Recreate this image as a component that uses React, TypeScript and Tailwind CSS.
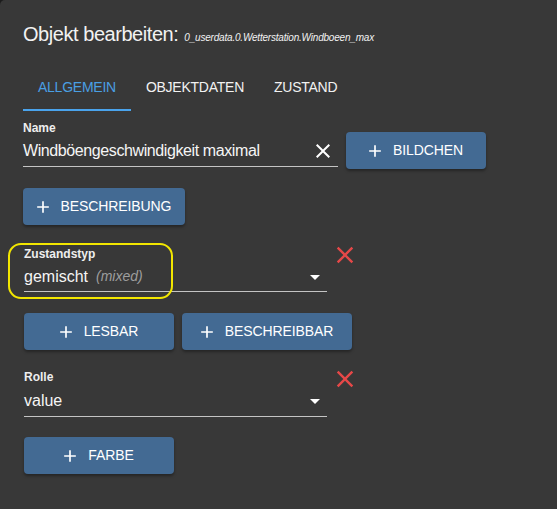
import { useState } from "react"

const font = { fontFamily: '"Liberation Sans", Arial, sans-serif' }

function PlusIcon() {
  return (
    <svg viewBox="0 0 24 24" className="w-[20px] h-[20px] -ml-[4px] mr-[8px] fill-current">
      <path d="M19 13h-6v6h-2v-6H5v-2h6V5h2v6h6v2z" />
    </svg>
  )
}

function CloseIcon({ className }: { className: string }) {
  return (
    <svg viewBox="0 0 24 24" className={className}>
      <path d="M19 6.41 17.59 5 12 10.59 6.41 5 5 6.41 10.59 12 5 17.59 6.41 19 12 13.41 17.59 19 19 17.59 13.41 12z" />
    </svg>
  )
}

function AddButton({ label, width }: { label: string; width: string }) {
  return (
    <button
      className={`${width} h-[37px] flex items-center justify-center rounded-[4px] bg-[#436a93] text-white text-[14px] tracking-[-0.1px] uppercase shadow-[0_2px_3px_rgba(0,0,0,0.35)]`}
    >
      <PlusIcon />
      {label}
    </button>
  )
}

function Arrow() {
  return (
    <svg viewBox="0 0 24 24" className="w-[24px] h-[24px] fill-white">
      <path d="M7 10l5 5 5-5z" />
    </svg>
  )
}

export default function App() {
  const [tab, setTab] = useState(0)
  const tabs = ["Allgemein", "Objektdaten", "Zustand"]

  return (
    <div className="w-[557px] h-[509px] bg-[#1c1c1c] overflow-hidden" style={font}>
      <div className="h-full bg-[#383838] rounded-tl-[5px] pl-[23px] text-white">
        {/* Title */}
        <div className="h-[63px] pt-[18px] flex items-baseline">
          <span className="text-[20px] leading-[32px] tracking-[-0.45px] text-[#f2f2f2]">Objekt bearbeiten:</span>
          <span className="ml-[6px] text-[10px] italic tracking-[-0.2px] text-[#f2f2f2]">0_userdata.0.Wetterstation.Windboeen_max</span>
        </div>

        {/* Tabs */}
        <div className="flex h-[48px]">
          {tabs.map((t, i) => (
            <button
              key={t}
              onClick={() => setTab(i)}
              className={`relative h-[48px] px-[15px] text-[14px] tracking-[-0.25px] uppercase ${
                tab === i ? "text-[#4a9fe3]" : "text-[#f2f2f2]"
              }`}
            >
              {t}
              {tab === i && <span className="absolute left-0 right-0 bottom-0 h-[2px] bg-[#4aa3ec]" />}
            </button>
          ))}
        </div>

        {/* Name */}
        <div className="flex items-start mt-[9px]">
          <div className="w-[315px]">
            <div className="h-[16px] text-[12px] leading-[16px] font-bold text-[#eeeeee]">Name</div>
            <div className="h-[31px] flex items-center border-b border-[#c4c4c4]">
              <span className="flex-1 text-[16px] tracking-[-0.4px] text-[#f5f5f5]">Windböengeschwindigkeit maximal</span>
              <CloseIcon className="w-[24px] h-[24px] fill-white mr-[3px]" />
            </div>
          </div>
          <div className="ml-[8px] mt-[12px]">
            <AddButton label="Bildchen" width="w-[140px]" />
          </div>
        </div>

        <div className="mt-[19px]">
          <AddButton label="Beschreibung" width="w-[162px]" />
        </div>

        {/* Zustandstyp */}
        <div className="flex items-start mt-[21px] pl-[1px]">
          <div className="relative w-[303px]">
            <div className="absolute -left-[16px] -top-[3px] w-[165px] h-[56px] rounded-[13px] border-2 border-[#f2e600]" />
            <div className="h-[16px] text-[12px] leading-[16px] font-bold text-[#eeeeee]">Zustandstyp</div>
            <div className="h-[30px] flex items-center border-b border-[#c4c4c4]">
              <span className="text-[16px] text-[#f5f5f5]">gemischt</span>
              <span className="ml-[8px] text-[14px] italic text-[#9e9e9e]">(mixed)</span>
              <span className="flex-1" />
              <Arrow />
            </div>
          </div>
          <CloseIcon className="w-[28px] h-[28px] fill-[#e64848] ml-[4px] -mt-[5px]" />
        </div>

        <div className="flex gap-[8px] mt-[21px] pl-[1px]">
          <AddButton label="Lesbar" width="w-[150px]" />
          <AddButton label="Beschreibbar" width="w-[170px]" />
        </div>

        {/* Rolle */}
        <div className="flex items-start mt-[19px] pl-[1px]">
          <div className="w-[303px]">
            <div className="h-[16px] text-[12px] leading-[16px] font-bold text-[#eeeeee]">Rolle</div>
            <div className="h-[32px] flex items-center border-b border-[#c4c4c4]">
              <span className="flex-1 text-[16px] text-[#f5f5f5]">value</span>
              <Arrow />
            </div>
          </div>
          <CloseIcon className="w-[28px] h-[28px] fill-[#e64848] ml-[4px] -mt-[4px]" />
        </div>

        <div className="mt-[20px] pl-[1px]">
          <AddButton label="Farbe" width="w-[150px]" />
        </div>
      </div>
    </div>
  )
}
